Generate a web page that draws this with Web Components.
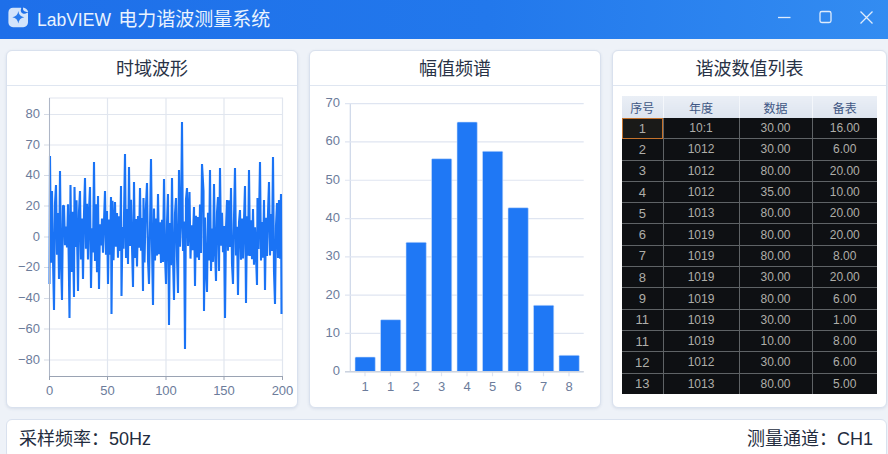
<!DOCTYPE html>
<html lang="zh">
<head>
<meta charset="utf-8">
<title>LabVIEW 电力谐波测量系统</title>
<style>
  html, body { margin: 0; height: 454px; overflow: hidden; background: #eef2f8; }
  body { font-family: "Liberation Sans", "Noto Sans CJK SC", sans-serif; }
  .latin { font-size: 17.5px; margin-right: 2px; }
</style>
</head>
<body>
<app-window>
  <title-bar slot="top"><span class="latin">LabVIEW</span> 电力谐波测量系统</title-bar>
  <panel-card heading="时域波形"><wave-chart></wave-chart></panel-card>
  <panel-card heading="幅值频谱"><bar-chart></bar-chart></panel-card>
  <panel-card heading="谐波数值列表"><data-table></data-table></panel-card>
  <status-bar slot="bottom">
    <span>采样频率：50Hz</span>
    <span>测量通道：CH1</span>
  </status-bar>
</app-window>

<script>
const FONT = '"Liberation Sans", "Noto Sans CJK SC", sans-serif';

class AppWindow extends HTMLElement {
  constructor() {
    super();
    this.attachShadow({ mode: 'open' });
    this.shadowRoot.innerHTML = `
      <style>
        :host { display: block; width: 888px; height: 454px; overflow: hidden; }
        .panels {
          display: grid;
          grid-template-columns: 292px 292px 275px;
          grid-template-rows: 358px;
          gap: 11px;
          padding: 11px 0 11px 6px;
        }
        .bottom { display: block; padding: 0 1px 0 6px; }
      </style>
      <slot name="top"></slot>
      <div class="panels"><slot></slot></div>
      <div class="bottom"><slot name="bottom"></slot></div>
    `;
  }
}

class TitleBar extends HTMLElement {
  constructor() {
    super();
    this.attachShadow({ mode: 'open' });
    this.shadowRoot.innerHTML = `
      <style>
        :host {
          display: flex;
          align-items: center;
          box-sizing: border-box;
          height: 39px;
          padding: 0 0 4px 8px;
          background: linear-gradient(90deg, #1e6fe9 0%, #2278ec 55%, #338cf1 100%);
          color: #eaf3fe;
          font: 19px ${FONT};
        }
        .logo { width: 21px; height: 21px; margin-right: 8px; flex: none; }
        .title { flex: 1; white-space: nowrap; }
        .controls { display: flex; gap: 16px; padding-right: 9px; }
        .controls svg { width: 25px; height: 25px; display: block; }
        .controls * { fill: none; stroke: #dfecfc; stroke-width: 1.3; }
      </style>
      <svg class="logo" viewBox="0 0 21 21">
        <path fill="#d3e4fb" d="M5 .8h7.6c.6 0 .8.5.5 1-.9 1.700-.2 3.600 1.300 4.500 1.500.9 3.400.7 4.600-.5.400-.4 1-.2 1 .4V15.500c0 2.700-2 4.700-4.700 4.700H5C2.300 20.200.4 18.200.4 15.500V5.500C.4 2.800 2.300.8 5 .8z"/>
        <path fill="#d3e4fb" d="M15.200.6c1.900.2 4.100 1.800 5 4.100-1.500.6-3.300.2-4.400-.9-.8-.8-1-2-.6-3.200z"/>
        <path fill="#2a7bec" d="M10.300 4c.5 3.600 2.300 5.500 6 6.300-3.700.8-5.500 2.700-6 6.300-.5-3.600-2.300-5.500-6-6.300 3.700-.8 5.500-2.700 6-6.300z"/>
      </svg>
      <span class="title"><slot></slot></span>
      <div class="controls">
        <svg viewBox="0 0 25 25"><path d="M6 12.500h12.500"/></svg>
        <svg viewBox="0 0 25 25"><rect x="7" y="6.500" width="11" height="11" rx="1.800"/></svg>
        <svg viewBox="0 0 25 25"><path d="M6.500 6.500l12 12M18.500 6.500l-12 12"/></svg>
      </div>
    `;
  }
}

class PanelCard extends HTMLElement {
  constructor() {
    super();
    this.attachShadow({ mode: 'open' });
  }

  connectedCallback() {
    this.shadowRoot.innerHTML = `
      <style>
        :host {
          display: flex;
          flex-direction: column;
          box-sizing: border-box;
          min-width: 0;
          background: #fff;
          border: 1px solid #d9e1ee;
          border-radius: 6px;
          box-shadow: 0 1px 3px rgba(60, 85, 130, 0.12);
          overflow: hidden;
        }
        .head {
          box-sizing: border-box;
          height: 35px;
          padding-top: 2px;
          flex: none;
          text-align: center;
          font: 18px/32px ${FONT};
          color: #283246;
          border-bottom: 1px solid #dfe6f1;
        }
        .body { flex: 1; min-height: 0; }
      </style>
      <div class="head">${this.getAttribute('heading')}</div>
      <div class="body"><slot></slot></div>
    `;
  }
}

// peaks and troughs of the trace, read off the reference
const WAVE_EVENTS = [
  [50,155],[52,190],[56,184],[60,170],[64,205],[70.5,184],[74.5,186],[80,190],[85,177],[90,186],[94,161],[98,195],
  [105,190],[111,196],[115,201],[121,185],[125,153],[129,166],[134,181],[140,187],[143.500,197],[147,182],
  [151,158],[158,193],[164,178],[168,193],[172,177],[176,197],[179,169],[182,121],[187,187],[189.500,191],
  [194,206],[198,216],[202,163],[203.500,190],[210,169],[214,183],[218,196],[220,167],[227,199],[231,187],
  [235,167],[240,209],[245,185],[249,169],[253,208],[257.500,197],[260,161],[264,199],[269,181],[273,156],
  [277,202],[281,193],
  [49.500,283],[54,309],[59,278],[62,299],[69.500,317],[74,296],[78,290],[83,278],[91,287],[99,288],[108,283],
  [111.500,313],[121.500,295],[133,286],[143,290],[149,283],[153,304],[166,283],[169,324],[174,299],[178,292],
  [185,348],[195,285],[204,310],[207,291],[216,280],[225,317],[233,283],[238,294],[246,302],[257,284],[265,289],
  [275,303],[281.500,313]
].sort((a, b) => a[0] - b[0]);

class WaveChart extends HTMLElement {
  constructor() {
    super();
    this.attachShadow({ mode: 'open' });
    this.render();
  }

  trace() {
    let seed = 17;
    const rnd = () => (seed = (seed * 16807) % 2147483647) / 2147483647;
    const pts = [];
    let sign = 1;
    for (let i = 0; i < WAVE_EVENTS.length; i++) {
      const [x, y] = WAVE_EVENTS[i];
      pts.push([x, y]);
      sign = y < 236 ? 1 : -1;
      const next = i + 1 < WAVE_EVENTS.length ? WAVE_EVENTS[i + 1][0] : 282.5;
      for (let fx = x + 1; fx < next - 0.6; fx += 1) {
        const amp = rnd() < 0.2 ? 22 + rnd() * 16 : 8 + rnd() * 18;
        pts.push([fx, 236 + sign * amp]);
        sign = -sign;
      }
    }
    return pts.map(p => p[0].toFixed(1) + ',' + p[1].toFixed(1)).join(' ');
  }

  render() {
    const ys = [[80,113.5],[70,144],[40,174.5],[20,205],[0,236],[-20,266.5],[-40,297.500],[-60,328],[-80,359]];
    const xs = [[0,49.500],[50,107.500],[100,166],[150,224],[200,282.500]];
    const yLines = ys.map(([v, y]) => `
      <line class="grid" x1="49.500" x2="282.500" y1="${y}" y2="${y}"/>
      <line class="tick" x1="44" x2="49.500" y1="${y}" y2="${y}"/>
      <text x="40" y="${y + 3.500}" text-anchor="end">${String(v).replace('-', '−')}</text>`).join('');
    const xLines = xs.map(([v, x]) => `
      <line class="grid" x1="${x}" x2="${x}" y1="97" y2="375"/>
      <line class="axis" x1="${x}" x2="${x}" y1="375" y2="379"/>
      <text x="${x}" y="394" text-anchor="middle">${v}</text>`).join('');
    this.shadowRoot.innerHTML = `
      <style>
        :host { display: block; height: 100%; }
        svg { display: block; width: 290px; height: 322px; }
        text { font: 13px ${FONT}; fill: #6c7c9b; }
        .grid { stroke: #e1e6ef; stroke-width: 1.200; }
        .tick { stroke: #d5dbe6; stroke-width: 1.200; }
        .axis { stroke: #9aa3b3; stroke-width: 1; }
      </style>
      <svg viewBox="7 85 290 322">
        ${yLines}${xLines}
        <line class="grid" x1="49" x2="283" y1="97" y2="97"/>
        <polyline points="${this.trace()}" fill="none" stroke="#1a73f5" stroke-width="2.100" stroke-linejoin="bevel"/>
        <line class="axis" x1="49.500" x2="49.500" y1="97" y2="375" style="stroke:#aeb6c6"/>
        <line class="axis" x1="49" x2="283" y1="375.500" y2="375.500"/>
      </svg>
    `;
  }
}

class BarChart extends HTMLElement {
  constructor() {
    super();
    this.attachShadow({ mode: 'open' });
    this.render();
  }

  render() {
    const tops = [356, 318.700, 241.300, 157.700, 121, 150.300, 206.700, 304.300, 354.300];
    const labels = ['1', '1', '2', '3', '4', '5', '6', '7', '8'];
    const base = 370.700;
    let out = '';
    for (let v = 0; v <= 7; v++) {
      const y = base - v * 38.290;
      out += `<line class="grid" x1="345" x2="583.700" y1="${y}" y2="${y}"/>
        <text x="340" y="${y + 3.500}" text-anchor="end">${v * 10}</text>`;
    }
    tops.forEach((top, i) => {
      const x = 355 + i * 25.500;
      out += `<rect x="${x}" y="${top}" width="20.300" height="${base - top}" rx="1" fill="#1f78f5" stroke="#cfe1fb" stroke-width=".6"/>
        <line class="grid" x1="${x + 10}" x2="${x + 10}" y1="${base}" y2="${base + 4.500}"/>
        <text x="${x + 10}" y="390" text-anchor="middle">${labels[i]}</text>`;
    });
    this.shadowRoot.innerHTML = `
      <style>
        :host { display: block; height: 100%; }
        svg { display: block; width: 290px; height: 322px; }
        text { font: 13px ${FONT}; fill: #6c7c9b; }
        .grid { stroke: #dfe5f1; stroke-width: 1.200; }
      </style>
      <svg viewBox="310 85 290 322">
        <line class="grid" x1="350.300" x2="350.300" y1="102.700" y2="371" style="stroke:#ccd6e8"/>
        ${out}
        <line x1="345" x2="583.700" y1="${base}" y2="${base}" stroke="#ccd3df" stroke-width="1.400"/>
      </svg>
    `;
  }
}

const TABLE_HEAD = ['序号', '年度', '数据', '备表'];
const TABLE_ROWS = [
  ['1', '10:1', '30.00', '16.00'],
  ['2', '1012', '30.00', '6.00'],
  ['3', '1012', '80.00', '20.00'],
  ['4', '1012', '35.00', '10.00'],
  ['5', '1013', '80.00', '20.00'],
  ['6', '1019', '80.00', '20.00'],
  ['7', '1019', '80.00', '8.00'],
  ['8', '1019', '30.00', '20.00'],
  ['9', '1019', '80.00', '6.00'],
  ['11', '1019', '30.00', '1.00'],
  ['11', '1019', '10.00', '8.00'],
  ['12', '1012', '30.00', '6.00'],
  ['13', '1013', '80.00', '5.00']
];

class DataTable extends HTMLElement {
  constructor() {
    super();
    this.attachShadow({ mode: 'open' });
    const head = TABLE_HEAD.map(t => `<th>${t}</th>`).join('');
    const rows = TABLE_ROWS.map(r => `<tr>${r.map(c => `<td>${c}</td>`).join('')}</tr>`).join('');
    this.shadowRoot.innerHTML = `
      <style>
        :host { display: block; padding: 10px 9px 0 9px; }
        table {
          width: 255px;
          table-layout: fixed;
          border-collapse: collapse;
          font: 12px ${FONT};
        }
        col:nth-child(1) { width: 41px; }
        col:nth-child(2) { width: 76px; }
        col:nth-child(3) { width: 73px; }
        col:nth-child(4) { width: 65px; }
        th {
          height: 22px;
          padding: 0;
          font-weight: 400;
          color: #3f5784;
          background: linear-gradient(180deg, #eaeff6, #dde4ee);
          border-left: 1px solid #f4f7fb;
        }
        th:first-child { border-left: 0; }
        td {
          height: 20.300px;
          padding: 0;
          text-align: center;
          color: #aeaea9;
          background: #0e1013;
          border: 1px solid #5f6366;
        }
        td:first-child { font-size: 13px; }
        tr td:first-child { border-left: 0; }
        tr td:last-child { border-right: 0; }
        tr:last-child td { border-bottom: 0; }
        tr:first-child td { border-top: 0; }
        tr:first-child td:first-child { outline: 1.500px solid #c4722c; outline-offset: -1px; background: #1a1a18; }
      </style>
      <table>
        <colgroup><col><col><col><col></colgroup>
        <thead><tr>${head}</tr></thead>
        <tbody>${rows}</tbody>
      </table>
    `;
  }
}

class StatusBar extends HTMLElement {
  constructor() {
    super();
    this.attachShadow({ mode: 'open' });
    this.shadowRoot.innerHTML = `
      <style>
        :host {
          display: flex;
          justify-content: space-between;
          align-items: center;
          box-sizing: border-box;
          height: 40px;
          padding: 0 13px 5px 12px;
          background: #fff;
          border: 1px solid #d9e1ee;
          border-radius: 6px;
          color: #232c3e;
          font: 18px ${FONT};
        }
      </style>
      <slot></slot>
    `;
  }
}

customElements.define('app-window', AppWindow);
customElements.define('title-bar', TitleBar);
customElements.define('panel-card', PanelCard);
customElements.define('wave-chart', WaveChart);
customElements.define('bar-chart', BarChart);
customElements.define('data-table', DataTable);
customElements.define('status-bar', StatusBar);
</script>
</body>
</html>
